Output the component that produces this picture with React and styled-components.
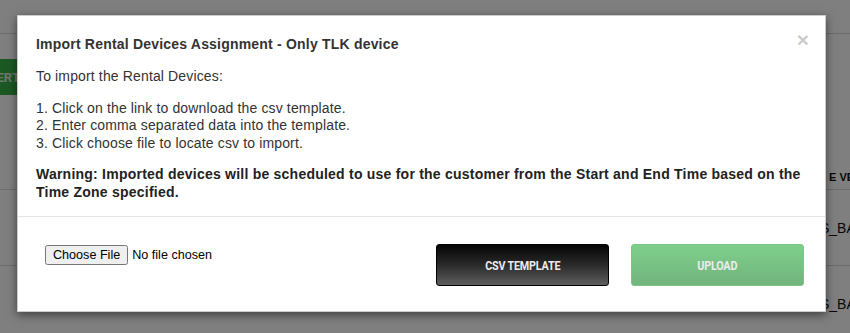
import React from "react";
import styled, { createGlobalStyle } from "styled-components";

const GlobalStyle = createGlobalStyle`
  html, body {
    margin: 0;
    padding: 0;
    background: #ffffff;
    font-family: "Liberation Sans", Arial, sans-serif;
  }
  * {
    box-sizing: border-box;
  }
`;

const Page = styled.div`
  position: relative;
  width: 850px;
  height: 333px;
  overflow: hidden;
  background: #ffffff;
`;

const TopBar = styled.div`
  height: 34px;
  border-bottom: 1px solid #d8d8d8;
`;

const Toolbar = styled.div`
  display: flex;
  padding-top: 25px;
  height: 130px;
`;

const GreenButton = styled.button`
  margin-left: -40px;
  height: 36px;
  padding: 0 14px;
  border: none;
  border-radius: 3px;
  background: #38b048;
  color: #d9ecd9;
  font-family: Roboto, "Liberation Sans", Arial, sans-serif;
  font-weight: bold;
  font-size: 13px;
  letter-spacing: -0.5px;
  word-spacing: -2px;
  white-space: nowrap;
`;

const TableRow = styled.div`
  display: flex;
  align-items: ${({ $head }) => ($head ? "flex-end" : "center")};
  height: ${({ $head }) => ($head ? "26px" : "76px")};
  padding-bottom: ${({ $head }) => ($head ? "6px" : "0")};
  border-bottom: 1px solid #d8d8d8;
`;

const Cell = styled.div`
  margin-left: ${({ $left }) => $left}px;
  white-space: nowrap;
  color: #111;
  font-size: ${({ $head }) => ($head ? "11px" : "14px")};
  font-weight: ${({ $head }) => ($head ? "bold" : "normal")};
`;

const Overlay = styled.div`
  position: absolute;
  inset: 0;
  background: rgba(0, 0, 0, 0.5);
  padding: 15px 0 0 17px;
`;

const Modal = styled.div`
  width: 809px;
  background: #ffffff;
  border: 1px solid rgba(0, 0, 0, 0.2);
  box-shadow: 0 3px 9px rgba(0, 0, 0, 0.5);
  color: #333333;
`;

const Header = styled.div`
  display: flex;
  justify-content: space-between;
  align-items: flex-start;
  padding: 18px 16px 0 18px;
`;

const Title = styled.h4`
  margin: 0;
  font-size: 14px;
  line-height: 20px;
  font-weight: bold;
  letter-spacing: 0.2px;
  color: #333333;
`;

const Close = styled.button`
  border: none;
  background: none;
  padding: 0;
  margin-top: -5px;
  font-family: "Liberation Sans", Arial, sans-serif;
  font-size: 21px;
  font-weight: bold;
  line-height: 1;
  color: #000;
  opacity: 0.2;
`;

const Body = styled.div`
  padding: 13px 18px 15px 18px;
  font-size: 14px;
  letter-spacing: 0.14px;
  border-bottom: 1px solid #e5e5e5;
`;

const Intro = styled.p`
  margin: 0 0 14.5px;
  line-height: 18px;
`;

const Steps = styled.p`
  margin: 0 0 13px;
  line-height: 17.5px;
`;

const Warning = styled.p`
  margin: 0;
  line-height: 18px;
  font-weight: bold;
  letter-spacing: 0.23px;
  color: #222222;
`;

const Footer = styled.div`
  display: flex;
  align-items: flex-start;
  gap: 22px;
  padding: 27px 21px 25px 27px;
`;

const FileInput = styled.input`
  flex: 1;
  margin-top: 1px;
  font-family: "Liberation Sans", Arial, sans-serif;
  font-size: 12.6px;
  color: #000;
`;

const ActionButton = styled.button`
  width: 173px;
  height: 42px;
  border-radius: 3px;
  border: 1px solid ${({ $variant }) => ($variant === "dark" ? "#000" : "#7cc487")};
  background: ${({ $variant }) =>
    $variant === "dark"
      ? "linear-gradient(to bottom, #050505 0%, #2a2a2a 50%, #5e5e5e 100%)"
      : "linear-gradient(to bottom, #7ecf8b 0%, #72b47d 100%)"};
  color: #ececec;
  font-family: Roboto, "Liberation Sans", Arial, sans-serif;
  font-weight: bold;
  font-size: 12.5px;
  text-transform: uppercase;
`;

const Label = styled.span`
  display: inline-block;
  transform: scaleX(0.86);
  letter-spacing: -0.2px;
`;

export default function App() {
  return (
    <>
      <GlobalStyle />
      <Page>
        <TopBar />
        <Toolbar>
          <GreenButton>ENTER TLK DEVICE</GreenButton>
        </Toolbar>
        <TableRow $head>
          <Cell $head $left={829}>E VERSION</Cell>
        </TableRow>
        <TableRow>
          <Cell $left={820}>S_BATTERY</Cell>
        </TableRow>
        <TableRow>
          <Cell $left={820}>S_BATTERY</Cell>
        </TableRow>

        <Overlay>
          <Modal>
            <Header>
              <Title>Import Rental Devices Assignment - Only TLK device</Title>
              <Close aria-label="Close">×</Close>
            </Header>
            <Body>
              <Intro>To import the Rental Devices:</Intro>
              <Steps>
                1. Click on the link to download the csv template.
                <br />
                2. Enter comma separated data into the template.
                <br />
                3. Click choose file to locate csv to import.
              </Steps>
              <Warning>
                Warning: Imported devices will be scheduled to use for the customer from the
                Start and End Time based on the Time Zone specified.
              </Warning>
            </Body>
            <Footer>
              <FileInput type="file" />
              <ActionButton $variant="dark">
                <Label>CSV Template</Label>
              </ActionButton>
              <ActionButton $variant="green">
                <Label>Upload</Label>
              </ActionButton>
            </Footer>
          </Modal>
        </Overlay>
      </Page>
    </>
  );
}
